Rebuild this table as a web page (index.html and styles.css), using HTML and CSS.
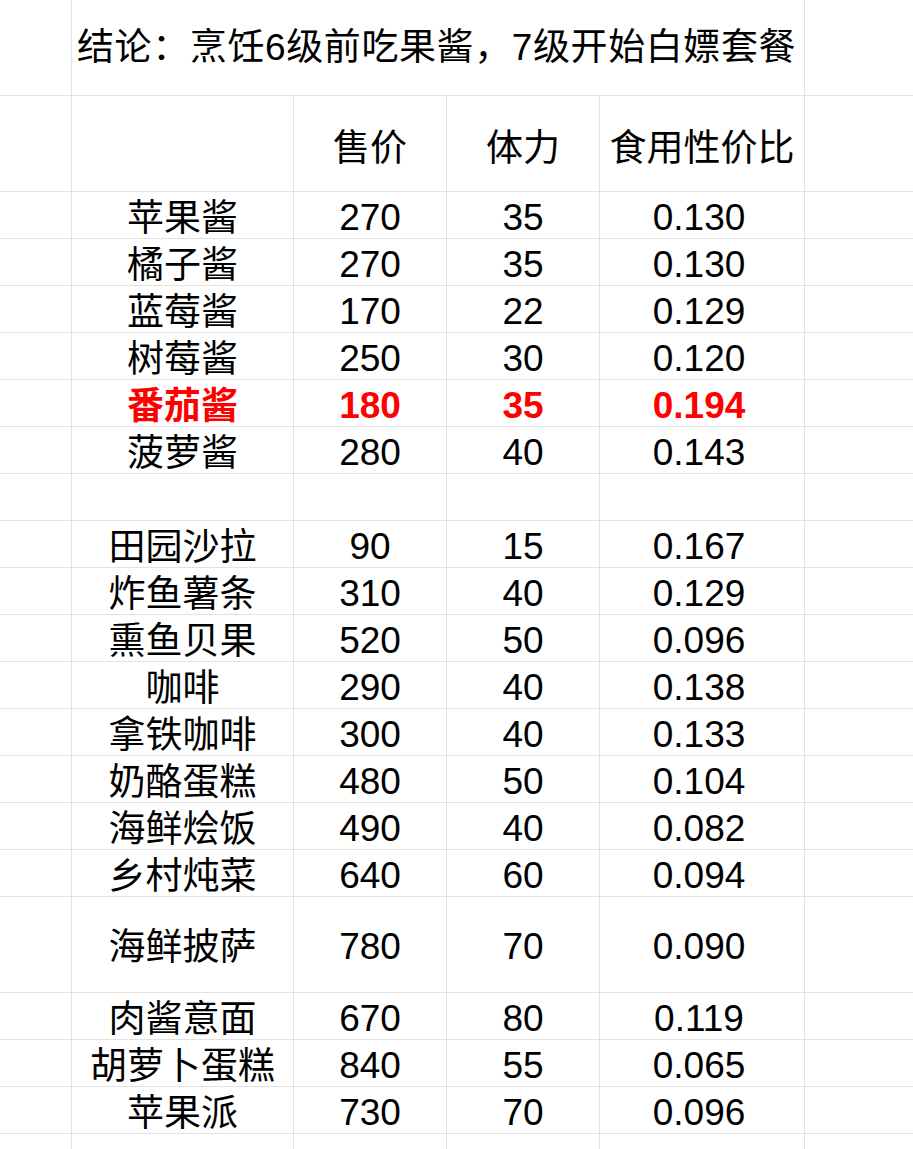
FILE: index.html
```html
<!DOCTYPE html>
<html lang="zh-CN">
<head>
<meta charset="utf-8">
<title>食用性价比</title>
<link rel="stylesheet" href="styles.css">
</head>
<body>
<div class="sheet">
  <!-- title row -->
  <div class="c"></div>
  <div class="c title span4">结论：烹饪6级前吃果酱，7级开始白嫖套餐</div>
  <div class="c"></div>
  <!-- header row -->
  <div class="c"></div>
  <div class="c"></div>
  <div class="c head">售价</div>
  <div class="c head">体力</div>
  <div class="c head">食用性价比</div>
  <div class="c"></div>

  <div class="c"></div><div class="c name">苹果酱</div><div class="c">270</div><div class="c">35</div><div class="c ratio">0.130</div><div class="c"></div>
  <div class="c"></div><div class="c name">橘子酱</div><div class="c">270</div><div class="c">35</div><div class="c ratio">0.130</div><div class="c"></div>
  <div class="c"></div><div class="c name">蓝莓酱</div><div class="c">170</div><div class="c">22</div><div class="c ratio">0.129</div><div class="c"></div>
  <div class="c"></div><div class="c name">树莓酱</div><div class="c">250</div><div class="c">30</div><div class="c ratio">0.120</div><div class="c"></div>
  <div class="c"></div><div class="c name hl">番茄酱</div><div class="c hl">180</div><div class="c hl">35</div><div class="c ratio hl">0.194</div><div class="c"></div>
  <div class="c"></div><div class="c name">菠萝酱</div><div class="c">280</div><div class="c">40</div><div class="c ratio">0.143</div><div class="c"></div>
  <div class="c"></div><div class="c"></div><div class="c"></div><div class="c"></div><div class="c"></div><div class="c"></div>
  <div class="c"></div><div class="c name">田园沙拉</div><div class="c">90</div><div class="c">15</div><div class="c ratio">0.167</div><div class="c"></div>
  <div class="c"></div><div class="c name">炸鱼薯条</div><div class="c">310</div><div class="c">40</div><div class="c ratio">0.129</div><div class="c"></div>
  <div class="c"></div><div class="c name">熏鱼贝果</div><div class="c">520</div><div class="c">50</div><div class="c ratio">0.096</div><div class="c"></div>
  <div class="c"></div><div class="c name">咖啡</div><div class="c">290</div><div class="c">40</div><div class="c ratio">0.138</div><div class="c"></div>
  <div class="c"></div><div class="c name">拿铁咖啡</div><div class="c">300</div><div class="c">40</div><div class="c ratio">0.133</div><div class="c"></div>
  <div class="c"></div><div class="c name">奶酪蛋糕</div><div class="c">480</div><div class="c">50</div><div class="c ratio">0.104</div><div class="c"></div>
  <div class="c"></div><div class="c name">海鲜烩饭</div><div class="c">490</div><div class="c">40</div><div class="c ratio">0.082</div><div class="c"></div>
  <div class="c"></div><div class="c name">乡村炖菜</div><div class="c">640</div><div class="c">60</div><div class="c ratio">0.094</div><div class="c"></div>
  <div class="c"></div><div class="c name">海鲜披萨</div><div class="c">780</div><div class="c">70</div><div class="c ratio">0.090</div><div class="c"></div>
  <div class="c"></div><div class="c name">肉酱意面</div><div class="c">670</div><div class="c">80</div><div class="c ratio">0.119</div><div class="c"></div>
  <div class="c"></div><div class="c name">胡萝卜蛋糕</div><div class="c">840</div><div class="c">55</div><div class="c ratio">0.065</div><div class="c"></div>
  <div class="c"></div><div class="c name">苹果派</div><div class="c">730</div><div class="c">70</div><div class="c ratio">0.096</div><div class="c"></div>
  <div class="c"></div><div class="c"></div><div class="c"></div><div class="c"></div><div class="c"></div><div class="c"></div>
</div>
</body>
</html>
```
FILE: styles.css
```css
html, body {
  margin: 0;
  padding: 0;
  background: #ffffff;
  overflow: hidden;
}
.sheet {
  display: grid;
  grid-template-columns: 71px 221px 152px 152px 204px 1fr;
  grid-template-rows: 95px 95px repeat(15, 46px) 95px repeat(3, 46px) 15px;
  gap: 1px;
  background: #e1e1e1;
  width: 913px;
  height: 1149px;
  overflow: hidden;
  font-family: "Liberation Sans", "Noto Sans CJK SC", sans-serif;
  font-size: 37px;
  line-height: 1;
  color: #000000;
}
.c {
  background: #ffffff;
  display: flex;
  align-items: center;
  justify-content: center;
  white-space: nowrap;
  padding-top: 4px;
  box-sizing: border-box;
}
.name {
  padding-top: 6px;
}
.span4 {
  grid-column: 2 / 6;
}
.title {
  justify-content: flex-start;
  padding-left: 5px;
  letter-spacing: 0.6px;
  padding-top: 0;
}
.head {
  padding-top: 10px;
}
.ratio {
  padding-right: 6px;
}
.hl {
  color: #ff0000;
  font-weight: bold;
}
```
